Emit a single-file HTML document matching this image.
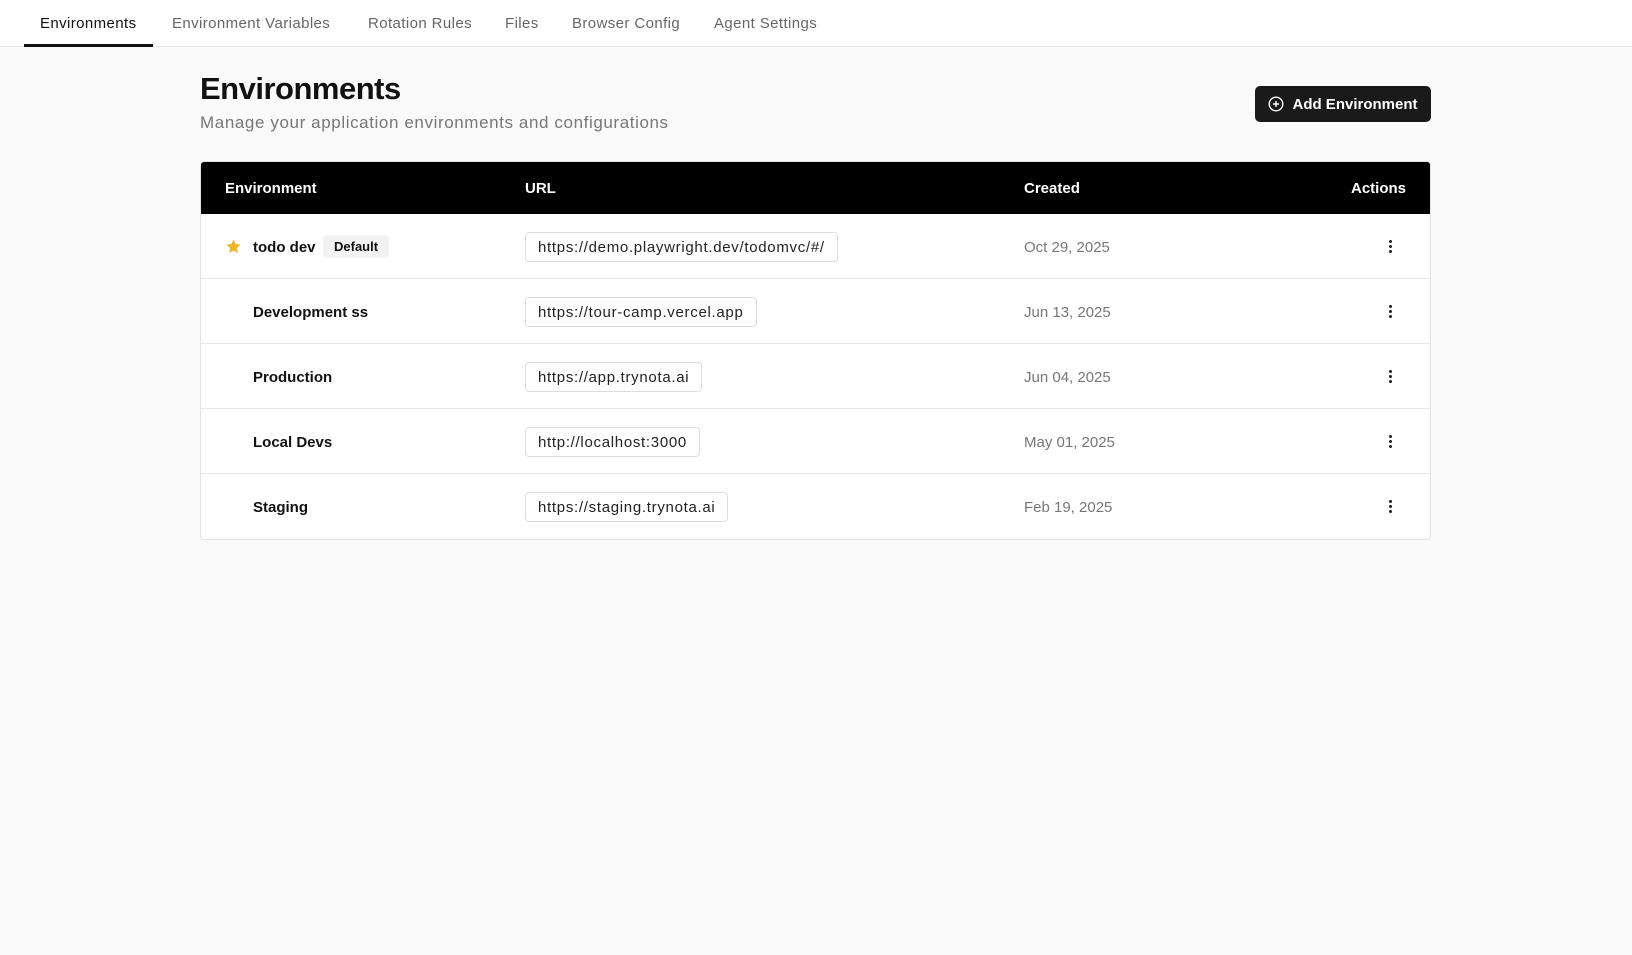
<!DOCTYPE html>
<html><head><meta charset="utf-8"><style>
*{box-sizing:border-box;margin:0;padding:0}
body{width:1632px;height:955px;background:#fafafa;font-family:"Liberation Sans",sans-serif;color:#111;position:relative;overflow:hidden}
.tabs{height:47px;background:#fff;border-bottom:1px solid #e5e5e5;position:relative}
.tab{position:absolute;top:15px;font-size:15px;color:#666;letter-spacing:0.4px}
.tab.a{color:#111}
.ul{position:absolute;left:24px;width:129px;top:44px;height:3px;background:#111}
h1{position:absolute;left:200px;top:71px;font-size:31px;font-weight:bold;letter-spacing:-0.5px}
.sub{position:absolute;left:200px;top:113px;font-size:17px;color:#777;letter-spacing:0.6px}
.btn{position:absolute;left:1255px;top:86px;width:176px;height:36px;background:#1a1a1a;border-radius:5px;color:#fff;font-size:15px;font-weight:bold;display:flex;align-items:center;justify-content:center;gap:8px}
.tbl{position:absolute;left:200px;top:161px;width:1231px;height:379px;background:#fff;border:1px solid #e3e3e3;border-radius:4px;overflow:hidden}
.hd{height:52px;background:#000;color:#fff;font-size:15px;font-weight:bold;position:relative}
.hd span,.row span{position:absolute}
.hd span{top:18px}
.row{height:65px;border-bottom:1px solid #e6e6e6;position:relative;font-size:15px}
.row:last-child{border-bottom:none}
.nm{left:52px;top:25px;font-weight:bold}
.url{left:324px;top:18px;height:30px;padding:1px 12px 0;line-height:28px;border:1px solid #ddd;border-radius:4px;font-size:15px;color:#222;letter-spacing:0.7px}
.dt{left:823px;top:25px;color:#777}
.dots{left:1188px;top:26px;width:3px}
.dots i{display:block;width:3px;height:3px;background:#222;border-radius:50%;margin-bottom:2px}
.badge{left:122px;top:21px;background:#f2f2f2;border-radius:4px;padding:4px 11px;font-size:13px;font-weight:bold}
</style></head><body>
<div class="tabs">
<span class="tab a" style="left:40px">Environments</span>
<span class="tab" style="left:172px">Environment Variables</span>
<span class="tab" style="left:368px">Rotation Rules</span>
<span class="tab" style="left:505px">Files</span>
<span class="tab" style="left:572px">Browser Config</span>
<span class="tab" style="left:714px">Agent Settings</span>
<div class="ul"></div>
</div>
<h1>Environments</h1>
<div class="sub">Manage your application environments and configurations</div>
<div class="btn"><svg width="16" height="16" viewBox="0 0 16 16"><circle cx="8" cy="8" r="6.8" fill="none" stroke="#fff" stroke-width="1.4"/><path d="M8 5v6M5 8h6" stroke="#fff" stroke-width="1.4"/></svg>Add Environment</div>
<div class="tbl">
<div class="hd"><span style="left:24px">Environment</span><span style="left:324px">URL</span><span style="left:823px">Created</span><span style="right:24px">Actions</span></div>
<div class="row"><span style="left:24px;top:24px"><svg width="17" height="17" viewBox="0 0 24 24"><path d="M12 2l3 6.5 7 .8-5.2 4.8 1.4 7L12 17.6 5.8 21.1l1.4-7L2 9.3l7-.8z" fill="#f0b429"/></svg></span><span class="nm">todo dev</span><span class="badge">Default</span><span class="url">https://demo.playwright.dev/todomvc/#/</span><span class="dt">Oct 29, 2025</span><span class="dots"><i></i><i></i><i></i></span></div>
<div class="row"><span class="nm">Development ss</span><span class="url">https://tour-camp.vercel.app</span><span class="dt">Jun 13, 2025</span><span class="dots"><i></i><i></i><i></i></span></div>
<div class="row"><span class="nm">Production</span><span class="url">https://app.trynota.ai</span><span class="dt">Jun 04, 2025</span><span class="dots"><i></i><i></i><i></i></span></div>
<div class="row"><span class="nm">Local Devs</span><span class="url">http://localhost:3000</span><span class="dt">May 01, 2025</span><span class="dots"><i></i><i></i><i></i></span></div>
<div class="row"><span class="nm">Staging</span><span class="url">https://staging.trynota.ai</span><span class="dt">Feb 19, 2025</span><span class="dots"><i></i><i></i><i></i></span></div>
</div>
</body></html>
